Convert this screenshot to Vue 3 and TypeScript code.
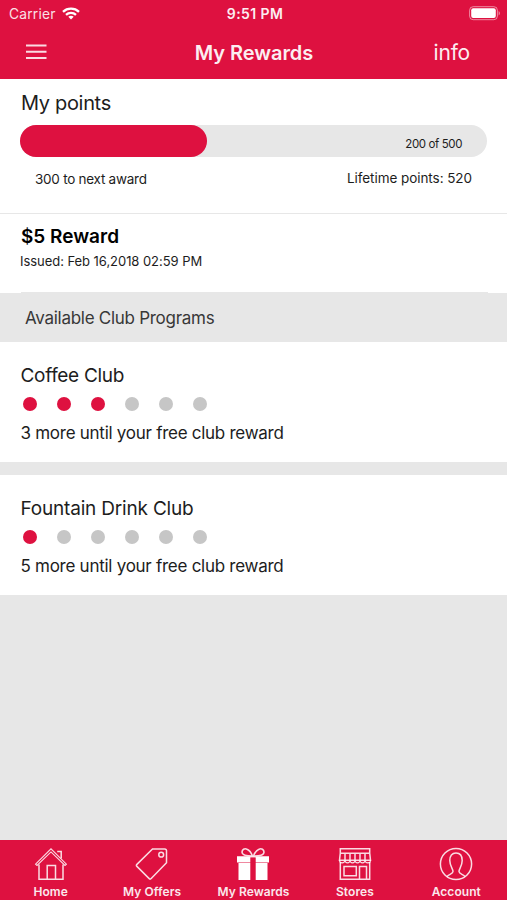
<script setup lang="ts">
interface Club {
  name: string
  earned: number
  total: number
}

const points = { current: 200, goal: 500, lifetime: 520 }
const clubs: Club[] = [
  { name: 'Coffee Club', earned: 3, total: 6 },
  { name: 'Fountain Drink Club', earned: 1, total: 6 },
]
const tabs: string[] = ['Home', 'My Offers', 'My Rewards', 'Stores', 'Account']
</script>

<template>
  <div class="screen">
    <header class="header">
      <div class="status">
        <div class="carrier">
          <span class="carrier-name">Carrier</span>
          <svg class="wifi" width="18" height="13" viewBox="0 0 18 13">
            <g fill="none" stroke="#fff" stroke-width="2.3">
              <path d="M1 4.8C5.4.6 12.6.6 17 4.8" />
              <path d="M4 7.9c2.8-2.6 7.2-2.6 10 0" />
            </g>
            <path d="M6.3 9.8c1.5-1.3 3.9-1.3 5.4 0L9 12.4z" fill="#fff" />
          </svg>
        </div>
        <span class="time">9:51 PM</span>
        <svg class="battery" width="32" height="15" viewBox="0 0 32 15">
          <rect x=".6" y=".7" width="27.8" height="13" rx="3.6" fill="none" stroke="#fff" stroke-opacity=".5" />
          <rect x="2.2" y="2.3" width="24.6" height="9.8" rx="2" fill="#fff" />
          <path d="M29.6 5v4.4c1.8-.7 1.8-3.7 0-4.4z" fill="#fff" fill-opacity=".5" />
        </svg>
      </div>
      <div class="nav">
        <svg class="menu" width="21" height="16" viewBox="0 0 21 16" stroke="#fff" stroke-opacity=".85" stroke-width="2">
          <path d="M0 1.5h20.5M0 7.8h20.5M0 14h20.5" />
        </svg>
        <h1 class="title">My Rewards</h1>
        <span class="info">info</span>
      </div>
    </header>

    <main>
      <section class="points">
        <h2 class="points-title">My points</h2>
        <div class="track">
          <div class="fill" :style="{ width: (points.current / points.goal) * 100 + '%' }"></div>
          <span class="count">{{ points.current }} of {{ points.goal }}</span>
        </div>
        <div class="summary">
          <span class="next">{{ points.goal - points.current }} to next award</span>
          <span class="lifetime">Lifetime points: {{ points.lifetime }}</span>
        </div>
      </section>

      <section class="reward">
        <h3 class="reward-name">$5 Reward</h3>
        <p class="issued">Issued: Feb 16,2018 02:59 PM</p>
        <div class="rule"></div>
      </section>

      <div class="programs">Available Club Programs</div>

      <div class="clubs">
        <section v-for="club in clubs" :key="club.name" class="club">
          <h3 class="club-name">{{ club.name }}</h3>
          <div class="dots">
            <i v-for="n in club.total" :key="n" class="dot" :class="{ on: n <= club.earned }"></i>
          </div>
          <p class="remaining">{{ club.total - club.earned }} more until your free club reward</p>
        </section>
      </div>
    </main>

    <nav class="tabs">
      <div v-for="tab in tabs" :key="tab" class="tab">
        <svg class="icon" width="34" height="34" viewBox="0 0 34 34" fill="none" stroke="#fff" stroke-opacity=".85" stroke-width="1.5">
          <g v-if="tab === 'Home'">
            <path d="M1.6 17.2 17 1.9l15.4 15.3-1.4 1.3L17 4.9 3 18.5z" stroke-width="1.1" />
            <path d="M5 17.5v14.7h24V17.5M13.2 32V18.5h8.3V32M23.2 4.6h4v6.8" />
          </g>
          <g v-else-if="tab === 'My Offers'">
            <path d="M17.5 2h12.2q1.8 0 1.8 1.8v12L16.2 31.6q-1 1-2 0L1.9 19.4q-1-1 0-2z" />
            <circle cx="26.2" cy="7.7" r="2.4" />
          </g>
          <g v-else-if="tab === 'My Rewards'">
            <path d="M1 9.2h13.3v6.2H1zM19.7 9.2H33v6.2H19.7zM2.5 16h11.8v17H2.5zM19.7 16h11.8v17H19.7z" fill="#fff" stroke="none" />
            <path d="M14 9.8h6" stroke-width="1.3" />
            <path d="M16.5 9C12.4 9 6 8.6 6 5.2 6 2.4 8.5 1 11 2.2c2.8 1.2 4.5 4.2 5.5 6.8zM17.5 9C21.6 9 28 8.6 28 5.2c0-2.8-2.5-4.2-5-3-2.8 1.2-4.5 4.2-5.5 6.8z" stroke-width="1.6" />
          </g>
          <g v-else-if="tab === 'Stores'">
            <path d="M2.3 1.8h29.4v4.4H2.3zM2.3 6.2 1.5 13.3h31l-.8-7.1M7 6.4v7M12 6.4v7M17 6.4v7M22 6.4v7M27 6.4v7" />
            <path d="M1.5 13.3q0 2.6 2.6 2.6T7 13.3q0 2.6 2.5 2.6t2.5-2.6q0 2.6 2.5 2.6t2.5-2.6q0 2.6 2.5 2.6t2.5-2.6q0 2.6 2.5 2.6t2.5-2.6q0 2.6 2.8 2.6t2.7-2.6" stroke-width="1.1" />
            <path d="M2.3 15v17.2h29.4V15M6 19.5h12.3v9.3H6zM21.5 32V19.5h7V32" />
          </g>
          <g v-else>
            <circle cx="17" cy="17" r="15.6" />
            <path d="M8 29.6c1.5-2.4 6-2.6 6-5.2 0-2.3-3.2-5.5-3.2-10.9 0-4.7 2.2-7.4 6.2-7.4s6.2 2.7 6.2 7.4c0 5.4-3.2 8.6-3.2 10.9 0 2.6 4.5 2.8 6 5.2" />
          </g>
        </svg>
        <span class="label">{{ tab }}</span>
      </div>
    </nav>
  </div>
</template>

<style>
body {
  margin: 0;
  background: #e7e7e7;
}
</style>

<style scoped>
.screen {
  display: flex;
  flex-direction: column;
  width: 507px;
  height: 900px;
  overflow: hidden;
  background: #e7e7e7;
  color: #1d1d1d;
  font-family: Inter, "Liberation Sans", sans-serif;
  white-space: nowrap;
}
h1, h2, h3, p { margin: 0; font-weight: 400; }
svg { display: block; flex: none; }
main { flex: 1; }
.header { height: 79px; background: #de1140; color: #fff; }
.status {
  display: grid;
  grid-template-columns: 1fr auto 1fr;
  align-items: center;
  height: 27px;
  padding: 0 6px 0 9px;
}
.carrier { display: flex; align-items: center; gap: 6px; }
.carrier-name { font-size: 13.8px; line-height: 18px; opacity: .87; letter-spacing: .2px; }
.time { font-size: 14px; font-weight: 600; letter-spacing: .4px; opacity: .93; }
.battery { justify-self: end; }
.nav {
  display: grid;
  grid-template-columns: 1fr auto 1fr;
  align-items: center;
  height: 50px;
  padding: 0 37px 0 26px;
}
.title { padding-left: 12px; font-size: 20px; font-weight: 600; line-height: 24px; letter-spacing: -.05px; margin-top: 1px; opacity: .93; }
.info { justify-self: end; margin-top: 2px; font-size: 21px; line-height: 24px; letter-spacing: -.2px; opacity: .93; }
.points { height: 135px; background: #fff; border-bottom: 1px solid #e7e7e7; box-sizing: border-box; padding: 12px 20px 0 21px; }
.points-title { font-size: 20px; line-height: 24px; letter-spacing: -.33px; }
.track { display: flex; justify-content: space-between; align-items: center; height: 32px; margin: 10.4px 0 0 -.7px; border-radius: 16px; background: #e7e7e7; }
.fill { height: 32px; border-radius: 16px; background: #de1140; }
.count { margin: 6px 25px 0 0; font-size: 11.5px; line-height: 14px; letter-spacing: -.4px; }
.summary { display: flex; justify-content: space-between; padding: 11.6px 15px 0 14px; font-size: 13.5px; line-height: 18px; }
.next { padding-top: 1px; letter-spacing: -.26px; }
.lifetime { letter-spacing: -.06px; }
.reward { height: 79px; box-sizing: border-box; padding: 11px 19px 0 21px; background: #fff; }
.reward-name { color: #000; font-size: 19px; font-weight: 600; line-height: 24px; }
.issued { margin: 3px 0 0 -1px; font-size: 13px; line-height: 18px; letter-spacing: -.05px; }
.rule { height: 1px; margin-top: 22px; background: #e7e7e7; }
.programs { height: 49px; padding-left: 25px; font-size: 17px; line-height: 51px; letter-spacing: -.28px; color: #383838; }
.clubs { display: grid; gap: 13.4px; }
.club { height: 120px; box-sizing: border-box; padding: 22px 21px 0 20.5px; background: #fff; }
.club-name { font-size: 19px; line-height: 24px; letter-spacing: -.3px; }
.club:last-child .club-name { letter-spacing: -.19px; }
.dots { display: flex; gap: 20.2px; height: 14px; margin: 9px 0 0 2px; }
.dot { width: 14px; height: 14px; border-radius: 50%; background: #c6c6c6; }
.dot.on { background: #de1140; }
.remaining { margin-top: 9.5px; font-size: 17px; line-height: 24px; letter-spacing: -.27px; }
.tabs { display: grid; grid-template-columns: repeat(5, 1fr); height: 60px; background: #de1140; color: #fff; }
.tab { display: flex; flex-direction: column; align-items: center; padding-top: 7px; }
.label { margin-top: 3px; font-size: 12px; font-weight: 600; line-height: 16px; letter-spacing: .07px; opacity: .9; }
</style>
